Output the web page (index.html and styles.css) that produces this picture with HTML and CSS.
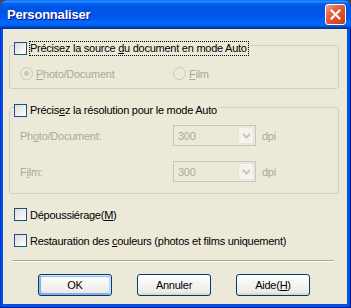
FILE: index.html
```html
<!DOCTYPE html>
<html lang="fr">

<head>
    <meta charset="UTF-8">
    <meta name="viewport" content="width=device-width, initial-scale=1.0">
    <title>Personnaliser</title>
    <link rel="stylesheet" href="styles.css">
</head>

<body>
    <section class="window">

        <div class="titlebar">
            <span class="title">Personnaliser</span>
            <button class="close" aria-label="Fermer">
                <svg width="13" height="13" viewBox="0 0 13 13">
                    <path d="M2.5 2.5 L10.5 10.5 M10.5 2.5 L2.5 10.5" stroke="#fff" stroke-width="2" stroke-linecap="square" fill="none" />
                </svg>
            </button>
        </div>

        <div class="client">

            <div class="group source">
                <div class="legend">
                    <span class="check"></span>
                    <span class="focus">Précisez la source <u>d</u>u document en mode Auto</span>
                </div>
                <div class="radios">
                    <div class="radio-item">
                        <span class="radio on"></span>
                        <span class="off-text"><u>P</u>hoto/Document</span>
                    </div>
                    <div class="radio-item">
                        <span class="radio"></span>
                        <span class="off-text"><u>F</u>ilm</span>
                    </div>
                </div>
            </div>

            <div class="group resolution">
                <div class="legend">
                    <span class="check"></span>
                    <span class="plain">Précis<u>e</u>z la résolution pour le mode Auto</span>
                </div>
                <div class="res-row first">
                    <span class="res-label off-text">Ph<u>o</u>to/Document:</span>
                    <div class="combo">
                        <span class="combo-value">300</span>
                        <span class="combo-btn">
                            <svg width="9" height="6" viewBox="0 0 9 6">
                                <path d="M1 1 L4.5 4.5 L8 1" stroke="#c9c7ba" stroke-width="2" fill="none" />
                            </svg>
                        </span>
                    </div>
                    <span class="unit off-text">dpi</span>
                </div>
                <div class="res-row">
                    <span class="res-label off-text">F<u>i</u>lm:</span>
                    <div class="combo">
                        <span class="combo-value">300</span>
                        <span class="combo-btn">
                            <svg width="9" height="6" viewBox="0 0 9 6">
                                <path d="M1 1 L4.5 4.5 L8 1" stroke="#c9c7ba" stroke-width="2" fill="none" />
                            </svg>
                        </span>
                    </div>
                    <span class="unit off-text">dpi</span>
                </div>
            </div>

            <div class="option dust">
                <span class="check"></span>
                <span>Dépoussiérage(<u>M</u>)</span>
            </div>
            <div class="option colors">
                <span class="check"></span>
                <span>Restauration des <u>c</u>ouleurs (photos et films uniquement)</span>
            </div>

            <div class="separator"></div>

            <div class="buttons">
                <button class="btn default">OK</button>
                <button class="btn">Annuler</button>
                <button class="btn">Aide(<u>H</u>)</button>
            </div>

        </div>

    </section>
</body>

</html>
```

FILE: styles.css
```css
:root {
    --dialog-bg: #ece9d8;
    --disabled-text: #aca899;
    --group-line: #d0d0bf;
    --check-border: #1c5180;
}

body {
    margin: 0;
    background: #4e4a36;
    font-family: "Liberation Sans", Arial, sans-serif;
    font-size: 11px;
    letter-spacing: -0.25px;
    color: #000;
}

.window {
    width: 351px;
    height: 308px;
    box-sizing: border-box;
    display: flex;
    flex-direction: column;
    background: #0054e3;
    border-radius: 7px 7px 0 0;
    overflow: hidden;
    box-shadow: inset -1px -1px #00138c, inset 1px 1px #0831d9;
}

.titlebar {
    height: 29px;
    flex: none;
    display: flex;
    align-items: center;
    justify-content: space-between;
    padding: 0 5px 0 7px;
    background: linear-gradient(180deg,
            #0058ee 0%, #3593ff 4%, #288eff 6%, #127dff 8%,
            #036ffc 10%, #0262ee 14%, #0057e5 20%, #0054e3 24%,
            #0055eb 56%, #005bf5 66%, #026afe 76%, #0062ef 86%,
            #0052d6 92%, #0040ab 94%, #003092 100%);
    border-radius: 7px 7px 0 0;
}

.title {
    color: #fff;
    font-weight: bold;
    font-size: 13px;
    letter-spacing: -0.2px;
    text-shadow: 1px 1px #0f1089;
}

.close {
    width: 21px;
    height: 21px;
    box-sizing: border-box;
    padding: 0;
    border: 1px solid #fff;
    border-radius: 3px;
    display: flex;
    align-items: center;
    justify-content: center;
    background: linear-gradient(135deg, #f3a48c 0%, #e5633f 35%, #d84b27 70%, #c23a1a 100%);
}

.client {
    flex: 1;
    margin: 0 4px 4px 3px;
    background: var(--dialog-bg);
    padding: 12px 8px 0 6px;
    display: flex;
    flex-direction: column;
}

/* group boxes */
.group {
    border: 1px solid var(--group-line);
    border-radius: 3px;
    display: flex;
    flex-direction: column;
}

.group.source {
    margin-top: 4px;
    padding-bottom: 8px;
}

.group.resolution {
    margin-top: 18px;
    padding-bottom: 11px;
}

.legend {
    display: flex;
    align-items: center;
    align-self: flex-start;
    margin: -5px 0 0 4px;
    padding-right: 1px;
    background: var(--dialog-bg);
    height: 15px;
    line-height: 13px;
}

.legend .check {
    margin-right: 2px;
}

.legend .focus {
    border: 1px dotted #000;
    padding: 0 1px 0 0;
}

.legend .plain {
    padding-left: 1px;
}

.check {
    width: 13px;
    height: 13px;
    box-sizing: border-box;
    flex: none;
    border: 1px solid var(--check-border);
    background: linear-gradient(135deg, #dcdcd7 0%, #fff 100%);
}

.off-text {
    color: var(--disabled-text);
}

.radios {
    display: flex;
    margin-top: 11px;
    padding-left: 10px;
    height: 13px;
}

.radio-item {
    display: flex;
    align-items: center;
    gap: 3px;
}

.radio-item:first-child {
    width: 153px;
}

.radio {
    width: 13px;
    height: 13px;
    box-sizing: border-box;
    border: 1px solid #cac8bb;
    border-radius: 50%;
    display: flex;
    align-items: center;
    justify-content: center;
}

.radio.on::after {
    content: "";
    width: 5px;
    height: 5px;
    border-radius: 50%;
    background: #cac8bb;
}

/* resolution rows */
.res-row {
    display: flex;
    align-items: center;
    padding-left: 10px;
    margin-top: 15px;
}

.res-row.first {
    margin-top: 7px;
}

.res-label {
    width: 153px;
    flex: none;
}

.combo {
    width: 83px;
    height: 21px;
    box-sizing: border-box;
    border: 1px solid #c9c7ba;
    display: flex;
    align-items: center;
    justify-content: space-between;
    padding: 0 1px 0 4px;
    color: var(--disabled-text);
}

.combo-btn {
    width: 16px;
    height: 17px;
    box-sizing: border-box;
    border: 1px solid #e8e6da;
    border-radius: 2px;
    background: #f4f3ee;
    display: flex;
    align-items: center;
    justify-content: center;
}

.unit {
    margin-left: 6px;
}

/* standalone options */
.option {
    display: flex;
    align-items: center;
    gap: 3px;
    margin-left: 5px;
    height: 15px;
}

.option.dust {
    margin-top: 13px;
}

.option.colors {
    margin-top: 11px;
}

.separator {
    margin: 12px 5px 0 3px;
    border-top: 1px solid #aca899;
    border-bottom: 1px solid #fff;
}

.buttons {
    display: flex;
    justify-content: center;
    gap: 25px;
    margin-top: 12px;
}

.btn {
    width: 74px;
    height: 22px;
    padding: 0;
    border: 1px solid #003c74;
    border-radius: 3px;
    font-family: "Liberation Sans", Arial, sans-serif;
    font-size: 11px;
    letter-spacing: -0.25px;
    color: #000;
    background: linear-gradient(180deg, #fff 0%, #ecebe6 86%, #d6d0c5 100%);
}

.btn.default {
    box-shadow: inset -1px 1px #cee7ff, inset 1px 2px #98b8ea,
        inset -2px 2px #bcd4f6, inset 1px -1px #89ade4,
        inset 2px -2px #89ade4;
}
```
